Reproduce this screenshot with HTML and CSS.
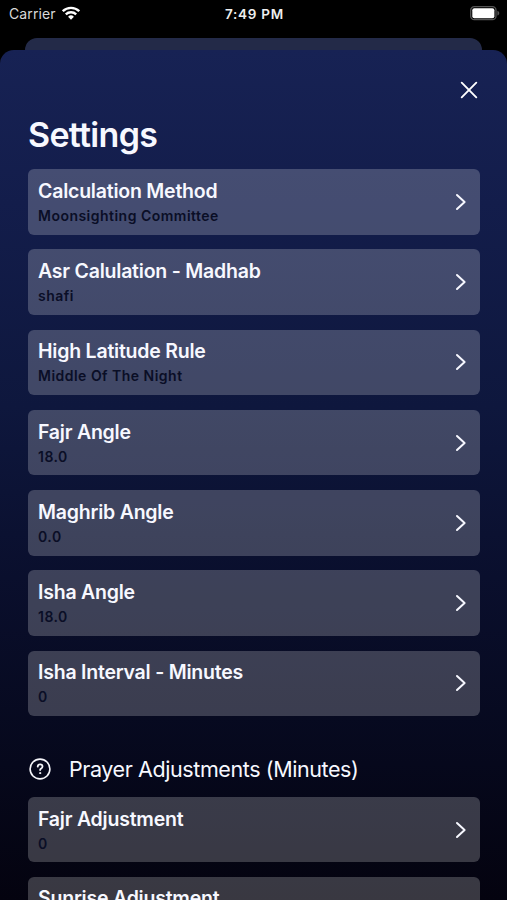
FILE: index.html
```html
<!DOCTYPE html>
<html lang="en">
<head>
<meta charset="utf-8">
<title>Settings</title>
<link rel="stylesheet" href="styles.css">
</head>
<body>
<svg class="defs" width="0" height="0"><symbol id="chevron" viewBox="0 0 12 18"><path d="M2 2l7.6 7L2 16" fill="none" stroke="currentColor" stroke-width="2" stroke-linecap="round" stroke-linejoin="round"/></symbol></svg>
<div class="screen">
  <header class="status">
    <div class="carrier"><span>Carrier</span>
      <svg width="18" height="14" viewBox="0 0 18 14" fill="none" stroke="#fff" stroke-width="2.3"><path d="M.8 5.2a11.6 11.6 0 0 1 16.4 0"/><path d="M3.8 8.4a7.4 7.4 0 0 1 10.4 0"/><path d="M9 13.7L6.1 10.8a4.1 4.1 0 0 1 5.8 0z" fill="#fff" stroke="none"/></svg>
    </div>
    <time class="time">7:49 PM</time>
    <svg class="battery" width="30" height="15" viewBox="0 0 30 15"><rect x=".7" y=".7" width="25.3" height="13" rx="3.6" fill="none" stroke="#555" stroke-width="1.3"/><rect x="2.3" y="2.2" width="22.1" height="10" rx="2" fill="#fff"/><path d="M27.4 4.8c2.5.8 2.5 4 0 4.8z" fill="#555"/></svg>
  </header>
  <div class="behind"></div>
  <main class="sheet">
    <button class="close" aria-label="Close"><svg width="18" height="18" viewBox="0 0 18 18"><path d="M1.7 1.7l14.6 14.6M16.3 1.7L1.7 16.3" stroke="#fff" stroke-width="1.9" stroke-linecap="round"/></svg></button>
    <h1>Settings</h1>
    <section class="list">
      <div class="card"><div><h2>Calculation Method</h2><p>Moonsighting Committee</p></div><svg class="chev"><use href="#chevron"/></svg></div>
      <div class="card"><div><h2>Asr Calulation - Madhab</h2><p>shafi</p></div><svg class="chev"><use href="#chevron"/></svg></div>
      <div class="card"><div><h2>High Latitude Rule</h2><p>Middle Of The Night</p></div><svg class="chev"><use href="#chevron"/></svg></div>
      <div class="card"><div><h2>Fajr Angle</h2><p>18.0</p></div><svg class="chev"><use href="#chevron"/></svg></div>
      <div class="card"><div><h2>Maghrib Angle</h2><p>0.0</p></div><svg class="chev"><use href="#chevron"/></svg></div>
      <div class="card"><div><h2>Isha Angle</h2><p>18.0</p></div><svg class="chev"><use href="#chevron"/></svg></div>
      <div class="card"><div><h2>Isha Interval - Minutes</h2><p>0</p></div><svg class="chev"><use href="#chevron"/></svg></div>
    </section>
    <div class="group">
      <svg width="22" height="22" viewBox="0 0 22 22" fill="none" stroke="#f5f5fa" stroke-linecap="round" stroke-linejoin="round"><circle cx="11" cy="11" r="9.9" stroke-width="1.6"/><path d="M8.7 8.6c.1-1.4 1-2.2 2.4-2.2s2.4.8 2.4 2c0 1-.5 1.5-1.3 2-.8.5-1.1.8-1.1 1.7" stroke-width="1.8"/><circle cx="11.1" cy="15.1" r=".6" fill="#f5f5fa" stroke-width="1"/></svg>
      <span>Prayer Adjustments (Minutes)</span>
    </div>
    <section class="list">
      <div class="card"><div><h2>Fajr Adjustment</h2><p>0</p></div><svg class="chev"><use href="#chevron"/></svg></div>
      <div class="card card-partial"><h2>Sunrise Adjustment</h2></div>
    </section>
  </main>
</div>
</body>
</html>
```
FILE: styles.css
```css
* { box-sizing: border-box; }
body { margin: 0; background: #000; font-family: Inter, "Liberation Sans", sans-serif; color: #f7f8ff; }
h1, h2, p { margin: 0; }
.defs { display: block; }
.screen { width: 507px; height: 900px; overflow: hidden; display: flex; flex-direction: column; }
.status { height: 38px; flex: none; display: grid; grid-template-columns: 1fr auto 1fr; align-items: start; padding: 6px 7px 0 9px; font-size: 14px; line-height: 16px; }
.carrier { display: flex; gap: 6px; color: #d9d9d9; letter-spacing: .12px; }
.carrier svg { margin-top: -.5px; }
.time { font-weight: 600; color: #eee; font-size: 13.5px; letter-spacing: .75px; }
.battery { justify-self: end; }
.behind { height: 12px; flex: none; margin: 0 25px; background: #232a48; border-radius: 12px 12px 0 0; }
.sheet { flex: 1; min-height: 0; overflow: hidden; padding: 30px 27px 0 28px; border-radius: 14px 14px 0 0; background: linear-gradient(#172254 0%, #131d4b 18%, #0e173d 42%, #0a0f2d 62%, #06081c 84%, #04030f 100%); display: flex; flex-direction: column; }
.close { align-self: flex-end; flex: none; width: 20px; height: 20px; margin-right: 1px; padding: 1px; border: 0; background: none; }
.close svg { display: block; }
h1 { flex: none; margin-top: 14px; height: 55.2px; line-height: 42px; font-size: 34px; font-weight: 600; letter-spacing: -.7px; }
.list { display: grid; flex: none; grid-auto-rows: 65.6px; row-gap: 14.65px; }
.card { display: flex; align-items: center; justify-content: space-between; padding: 0 13.5px 0 10px; border-radius: 6px; background: rgba(255, 255, 255, .21); }
.card-partial { align-items: flex-start; padding-top: 9.4px; }
h2 { font-size: 19.5px; line-height: 24px; font-weight: 600; letter-spacing: -.22px; white-space: nowrap; }
p { margin-top: 4px; font-size: 14px; line-height: 18px; font-weight: 600; letter-spacing: .48px; color: #0a0e26; white-space: nowrap; }
.chev { width: 12px; height: 18px; }
.group { flex: none; display: flex; align-items: center; gap: 18px; height: 80.6px; padding: 24.8px 0 0 1px; font-size: 21.5px; line-height: 26px; letter-spacing: -.41px; }
```
